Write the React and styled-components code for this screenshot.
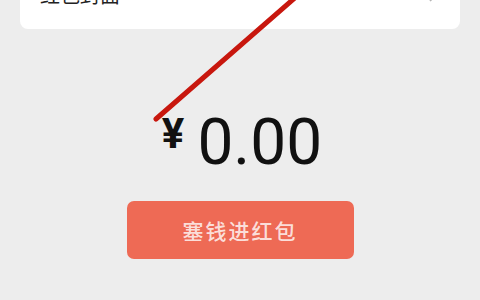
import React from "react";
import styled, { createGlobalStyle } from "styled-components";

const Global = createGlobalStyle`
  html, body { margin: 0; padding: 0; background: #ededed; overflow: hidden; }
  body { font-family: "Noto Sans CJK SC", "Noto Sans", sans-serif; }
`;

const Page = styled.div`
  position: relative;
  width: 480px;
  height: 300px;
  overflow: hidden;
  display: flex;
  flex-direction: column;
  align-items: center;
`;

const Card = styled.div`
  align-self: stretch;
  margin: -40px 20px 0;
  height: 69px;
  box-sizing: border-box;
  padding: 0 22px 0 20px;
  background: #ffffff;
  border-radius: 8px;
  display: flex;
  align-items: center;
  justify-content: space-between;
`;

const CardLabel = styled.span`
  font-size: 20px;
  color: #222;
  line-height: 1;
`;

const Chevron = styled.svg`
  width: 10px;
  height: 16px;
  color: #b5b5b5;
`;

const Amount = styled.div`
  margin-top: 82px;
  display: flex;
  align-items: flex-start;
  gap: 13px;
  color: #111;
  padding-left: 4px;
`;

const Yen = styled.span`
  font-family: "Roboto", "Liberation Sans", sans-serif;
  font-weight: 700;
  font-size: 42px;
  line-height: 1;
  margin-top: 2px;
`;

const Value = styled.span`
  font-family: "Roboto", "Liberation Sans", sans-serif;
  font-weight: 400;
  font-size: 64px;
  line-height: 1;
`;

const Button = styled.button`
  margin-top: 26px;
  width: 227px;
  height: 58px;
  border: none;
  border-radius: 7px;
  background: #ee6a55;
  color: rgba(255, 255, 255, 0.8);
  font-family: "Noto Sans CJK SC", sans-serif;
  font-size: 21px;
  font-weight: 500;
  letter-spacing: 2px;
  cursor: pointer;
`;

const Annotation = styled.svg`
  position: absolute;
  left: 0;
  top: 0;
  width: 480px;
  height: 300px;
  pointer-events: none;
`;

export default function App() {
  return (
    <Page>
      <Global />
      <Card>
        <CardLabel>红包封面</CardLabel>
        <Chevron viewBox="0 0 10 16" fill="none">
          <path d="M2 2l6 6-6 6" stroke="currentColor" strokeWidth="1.6" />
        </Chevron>
      </Card>
      <Amount>
        <Yen>¥</Yen>
        <Value>0.00</Value>
      </Amount>
      <Button>塞钱进红包</Button>
      <Annotation viewBox="0 0 480 300">
        <line x1="156" y1="119" x2="297" y2="-4" stroke="#c8170e" strokeWidth="5" strokeLinecap="round" />
      </Annotation>
    </Page>
  );
}
